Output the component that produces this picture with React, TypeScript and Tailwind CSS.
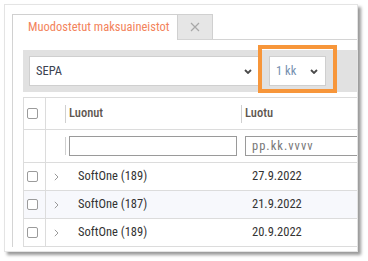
import React from 'react';

/* pieni nuoli valikkoon */
function Caret() {
  return (
    <svg width="8" height="5" viewBox="0 0 8 5" className="shrink-0">
      <path d="M1 1l3 3 3-3" fill="none" stroke="#4a4a4a" strokeWidth="1.8" />
    </svg>
  );
}

function RowChevron() {
  return (
    <svg width="5" height="8" viewBox="0 0 5 8">
      <path d="M0.8 0.8L4 4 0.8 7.2" fill="none" stroke="#9a9a9a" strokeWidth="1" />
    </svg>
  );
}

function Box() {
  return <div className="h-[11px] w-[11px] rounded-[2px] border border-[#9b9b9b] bg-white" />;
}

const rows = [
  { name: 'SoftOne (189)', date: '27.9.2022' },
  { name: 'SoftOne (187)', date: '21.9.2022' },
  { name: 'SoftOne (189)', date: '20.9.2022' },
];

export default function App() {
  return (
    <div className="relative h-[261px] w-[368px] overflow-hidden bg-white pl-[4px] pt-[4px] font-['Roboto_Condensed','Liberation_Sans_Narrow','DejaVu_Sans_Condensed',Roboto,sans-serif] font-stretch-condensed text-[12.5px] text-[#333]">
      <div className="h-[248px] w-[354px] overflow-hidden border border-[#e4e4e4] bg-white pl-[7px] pt-[9px] shadow-[3px_3px_3px_rgba(0,0,0,0.4)]">
        {/* välilehdet */}
        <div className="flex h-[25px]">
          <div className="relative z-10 -mb-px flex h-[26px] w-[166px] items-center border-x border-t border-[#d0d0d0] bg-white pl-[15px] text-[#f3835b]">
            Muodostetut maksuaineistot
          </div>
          <div className="flex h-[25px] w-[35px] items-center justify-center border-r border-t border-[#d0d0d0] bg-[#e6e6e6]">
            <svg width="10" height="10" viewBox="0 0 10 10">
              <path d="M1 1l8 8M9 1l-8 8" stroke="#a8a8a8" strokeWidth="1.2" />
            </svg>
          </div>
        </div>

        <div className="w-[420px] border-l border-t border-[#d4d4d4] pl-[10px] pt-[10px]">
          {/* suodattimet */}
          <div className="flex h-[42px] items-center gap-[10px] bg-[#e1e1e1] px-[6px]">
            <div className="flex h-[30px] w-[230px] items-center justify-between border border-[#cfcfcf] bg-white px-[6px] text-[#3b4250]">
              <span>SEPA</span>
              <Caret />
            </div>
            <div className="flex h-[30px] w-[57px] items-center justify-between border border-[#cfcfcf] bg-white pl-[6px] pr-[7px] text-[#7590b0]">
              <span>1 kk</span>
              <Caret />
            </div>
          </div>

          {/* taulukko */}
          <div className="mt-[5px] border-l border-t border-[#dcdcdc]">
            <div className="flex h-[32px] border-b border-[#dcdcdc]">
              <div className="flex w-[22px] items-center border-r border-[#dcdcdc] pl-[3px]">
                <Box />
              </div>
              <div className="w-[19px]" />
              <div className="flex w-[176px] items-center">
                <div className="h-[18px] w-px bg-[#d0d0d0]" />
                <span className="pl-[3px] font-medium text-[#5e564f]">Luonut</span>
              </div>
              <div className="flex flex-1 items-center">
                <div className="h-[18px] w-px bg-[#d0d0d0]" />
                <span className="pl-[3px] font-medium text-[#5e564f]">Luotu</span>
              </div>
            </div>

            <div className="flex h-[33px] border-b border-[#dcdcdc]">
              <div className="w-[22px] border-r border-[#dcdcdc]" />
              <div className="w-[19px]" />
              <div className="flex w-[176px] items-center">
                <div className="h-[18px] w-px bg-[#d0d0d0]" />
                <div className="ml-[3px] h-[20px] w-[168px] border border-[#9a9a9a] bg-white" />
              </div>
              <div className="flex flex-1 items-center pl-[4px]">
                <div className="flex h-[20px] w-[150px] items-center border border-[#9a9a9a] bg-white pl-[6px] tracking-[1px] text-[#777]">
                  pp.kk.vvvv
                </div>
              </div>
            </div>

            {rows.map((r, i) => (
              <div
                key={i}
                className={`flex h-[28px] border-b border-[#dcdcdc] ${i === 1 ? 'bg-[#f7f8fc]' : 'bg-white'}`}
              >
                <div className="flex w-[22px] items-center border-r border-[#dcdcdc] pl-[3px]">
                  <Box />
                </div>
                <div className="flex w-[19px] items-center pl-[8px]">
                  <RowChevron />
                </div>
                <div className="flex w-[176px] items-center pl-[13px]">{r.name}</div>
                <div className="flex flex-1 items-center pl-[11px]">{r.date}</div>
              </div>
            ))}
          </div>
        </div>
      </div>

      {/* korostus */}
      <div className="absolute left-[258px] top-[45px] h-[48px] w-[79px] border-4 border-[#f7963a]" />
    </div>
  );
}
